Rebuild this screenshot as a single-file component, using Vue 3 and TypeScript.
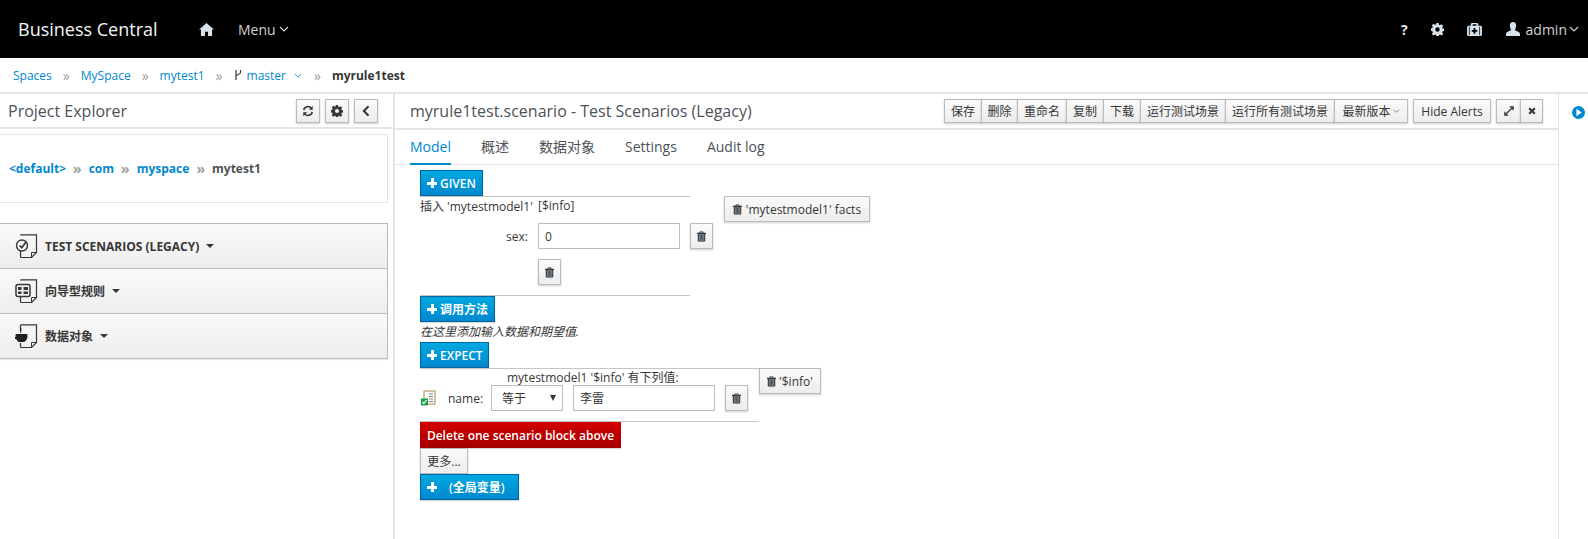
<script setup lang="ts">
const crumbs = ['Spaces', 'MySpace', 'mytest1']
const pkg = ['<default>', 'com', 'myspace']
const actions = [
  { label: '保存', w: 38 },
  { label: '删除', w: 37 },
  { label: '重命名', w: 50 },
  { label: '复制', w: 38 },
  { label: '下载', w: 38 },
  { label: '运行测试场景', w: 86 },
  { label: '运行所有测试场景', w: 110 },
]
const tabs = ['Model', '概述', '数据对象', 'Settings', 'Audit log']
</script>

<template>
  <div class="page">
    <header class="topbar">
      <span class="brand">Business Central</span>
      <svg class="ico home" viewBox="0 0 16 14"><path d="M8 0 L16 7 L14 7 L14 14 L9.6 14 L9.6 9.5 L6.4 9.5 L6.4 14 L2 14 L2 7 L0 7 Z" fill="#d8e2ea"/></svg>
      <span class="menu">Menu</span>
      <svg class="caret" viewBox="0 0 10 6"><path d="M1 1 L5 5 L9 1" fill="none" stroke="#d1d1d1" stroke-width="1.2"/></svg>
      <div class="topright">
        <span class="q">?</span>
        <svg class="ico cog" viewBox="0 0 16 16"><path fill="#d8e2ea" fill-rule="evenodd" d="M6.6 0h2.8l.4 2.2 1.3.6 1.9-1.300 2 2-1.300 1.900.6 1.300 2.200.4v2.800l-2.200.4-.6 1.300 1.300 1.900-2 2-1.900-1.300-1.300.6-.4 2.200H6.600l-.4-2.200-1.300-.6-1.900 1.300-2-2 1.300-1.900-.6-1.300L-.5 9.400V6.600l2.200-.4.6-1.300L1 3l2-2 1.900 1.300 1.300-.6zM8 5.300a2.700 2.700 0 1 0 0 5.400 2.700 2.700 0 0 0 0-5.400z"/></svg>
        <svg class="ico kit" viewBox="0 0 16 14"><path fill="#d8e2ea" fill-rule="evenodd" d="M5 0h6l1 1v2h3l1 1v9l-1 1H1l-1-1V4l1-1h3V1zM6 1.400V3h4V1.400zM7 5.500v2H5v2h2v2h2v-2h2v-2H9v-2zM2 4v9h.8V4zm11.200 0v9h.8V4z"/></svg>
        <svg class="ico user" viewBox="0 0 14 14"><path fill="#d8e2ea" d="M7 0c2 0 3.200 1.500 3.200 3.500S9 7.500 8.800 8.300c1.500.8 5.200 1.500 5.200 3.700v2H0v-2c0-2.200 3.700-2.900 5.200-3.700C5 7.500 3.800 5.500 3.800 3.500S5 0 7 0z"/></svg>
        <span class="admin">admin</span>
        <svg class="caret" viewBox="0 0 10 6"><path d="M1 1 L5 5 L9 1" fill="none" stroke="#d1d1d1" stroke-width="1.2"/></svg>
      </div>
    </header>

    <nav class="crumbs">
      <template v-for="c in crumbs" :key="c">
        <a class="link">{{ c }}</a>
        <span class="sep">»</span>
      </template>
      <svg class="branch" viewBox="0 0 8 12"><path d="M2 1V11M6.500 1V3.500C6.500 5.500 2 5.500 2 7.500" fill="none" stroke="#363636" stroke-width="1.200"/></svg>
      <a class="link branchname">master</a>
      <svg class="caret small" viewBox="0 0 10 6"><path d="M1 1 L5 5 L9 1" fill="none" stroke="#0088ce" stroke-width="1.100"/></svg>
      <span class="sep">»</span>
      <strong class="current">myrule1test</strong>
    </nav>

    <div class="body">
      <aside class="left">
        <div class="lefthead">
          <span class="lefttitle">Project Explorer</span>
          <div class="leftbtns">
            <button class="iconbtn"><svg viewBox="0 0 14 14" class="b"><path d="M2 6a5 5 0 0 1 9-2M12 8a5 5 0 0 1-9 2" fill="none" stroke="#363636" stroke-width="1.800"/><path d="M12.500 1v4.500H8zM1.500 13V8.500H6z" fill="#363636"/></svg></button>
            <button class="iconbtn"><svg viewBox="0 0 16 16" class="b"><path fill="#363636" fill-rule="evenodd" d="M6.600 0h2.800l.4 2.200 1.300.6 1.900-1.300 2 2-1.300 1.900.6 1.300 2.200.4v2.800l-2.200.4-.6 1.300 1.300 1.900-2 2-1.900-1.300-1.300.6-.4 2.200H6.600l-.4-2.200-1.300-.6-1.900 1.300-2-2 1.300-1.900-.6-1.300-2.200-.4V6.600l2.200-.4.6-1.300L1 3l2-2 1.900 1.300 1.300-.6zM8 5.300a2.700 2.700 0 1 0 0 5.400 2.700 2.700 0 0 0 0-5.400z"/></svg></button>
            <button class="iconbtn"><svg viewBox="0 0 10 14" class="b"><path d="M8 1.500 L2.500 7 L8 12.500" fill="none" stroke="#363636" stroke-width="2.400"/></svg></button>
          </div>
        </div>
        <div class="pkg">
          <template v-for="p in pkg" :key="p">
            <a class="pkglink">{{ p }}</a>
            <span class="pkgsep">»</span>
          </template>
          <span class="pkgcur">mytest1</span>
        </div>
        <div class="accordion">
          <div class="acc">
            <span class="docicon">
              <svg viewBox="0 0 24 24"><path d="M5.500 1.500Q5.500 .8 6.500 .8H21.500V18.500L16.500 23.500H6.500Q5.500 23.500 5.500 22.500V17" fill="none" stroke="#363636" stroke-width="1.200"/><path d="M16.500 23.500V18.500H21.500" fill="none" stroke="#363636" stroke-width="1"/><circle cx="7" cy="11.500" r="5.500" fill="#f5f5f5" stroke="#363636" stroke-width="1.400"/><path d="M4.500 11.500 L6.800 13.800 L11 8" fill="none" stroke="#363636" stroke-width="1.700"/></svg>
            </span>
            <span class="acctext latin">TEST SCENARIOS (LEGACY)</span><i class="tri"></i>
          </div>
          <div class="acc">
            <span class="docicon">
              <svg viewBox="0 0 24 24"><path d="M5.500 1.500Q5.500 .8 6.500 .8H21.500V18.500L16.500 23.500H6.500Q5.500 23.500 5.500 22.500V17" fill="none" stroke="#363636" stroke-width="1.200"/><path d="M16.500 23.500V18.500H21.500" fill="none" stroke="#363636" stroke-width="1"/><rect x="1" y="5.500" width="14" height="12" rx="2" fill="#f5f5f5" stroke="#363636" stroke-width="1.500"/><path d="M3 8h3.500v3H3zM3 12.500h3.500V15H3zM8.500 8H13v3H8.500zM8.500 12.500H13V15H8.500z" fill="#363636"/></svg>
            </span>
            <span class="acctext">向导型规则</span><i class="tri"></i>
          </div>
          <div class="acc">
            <span class="docicon">
              <svg viewBox="0 0 24 24"><path d="M5.500 7V1.500Q5.500 .8 6.500 .8H21.500V18.500L16.500 23.500H6.500Q5.500 23.500 5.500 22.500V19" fill="none" stroke="#363636" stroke-width="1.200"/><path d="M16.500 23.500V18.500H21.500" fill="none" stroke="#363636" stroke-width="1"/><path d="M1 10.500H12V12C12 15 10.500 17 9 17.500H4C2.500 17 1 15 1 12ZM5.500 4C7 6 4.500 6.500 6 9" fill="#1f1f1f" stroke="#1f1f1f" stroke-width="1"/><path d="M0 13H2V15H0Z" fill="#1f1f1f"/></svg>
            </span>
            <span class="acctext">数据对象</span><i class="tri"></i>
          </div>
        </div>
      </aside>

      <main class="center">
        <div class="titlebar">
          <span class="doc-title">myrule1test.scenario - Test Scenarios (Legacy)</span>
          <div class="toolbar">
            <div class="group">
              <button v-for="a in actions" :key="a.label" class="tbtn" :style="{ width: a.w + 'px' }">{{ a.label }}</button>
              <button class="tbtn latest">最新版本<svg class="caret tiny" viewBox="0 0 10 6"><path d="M1 1 L5 5 L9 1" fill="none" stroke="#4d5258" stroke-width="1"/></svg></button>
            </div>
            <button class="tbtn alone">Hide Alerts</button>
            <div class="group">
              <button class="tbtn sq1"><svg viewBox="0 0 12 12" class="tool"><path d="M7 1h4v4M5 11H1V7M10.500 1.500 1.500 10.500" fill="none" stroke="#363636" stroke-width="1.500"/></svg></button>
              <button class="tbtn sq2"><svg viewBox="0 0 10 10" class="tool small"><path d="M1.500 1.500 8.500 8.500M8.500 1.500 1.500 8.500" stroke="#363636" stroke-width="2.600"/></svg></button>
            </div>
          </div>
        </div>
        <div class="tabs">
          <span v-for="(t, i) in tabs" :key="t" class="tab" :class="{ active: i === 0 }">{{ t }}</span>
        </div>

        <section class="editor">
          <button class="blue given"><span class="plus"></span>GIVEN</button>
          <div class="block">
            <div class="blockmain">
              <div class="line w270 r1">
                <span class="insert">插入 'mytestmodel1'</span>
                <span>[$info]</span>
              </div>
              <div class="r2">
                <span class="sexlabel">sex:</span>
                <div class="field w142">0</div>
                <button class="gbtn trash">
                  <svg viewBox="0 0 12 14" class="tr"><use href="#trash"/></svg>
                </button>
              </div>
              <div class="r3">
                <button class="gbtn trash nomargin">
                  <svg viewBox="0 0 12 14" class="tr"><use href="#trash"/></svg>
                </button>
              </div>
            </div>
            <button class="gbtn facts">
              <svg viewBox="0 0 12 14" class="tr"><use href="#trash"/></svg>'mytestmodel1' facts
            </button>
          </div>
          <div class="line w270 hr2"></div>
          <button class="blue call"><span class="plus"></span>调用方法</button>
          <div class="hint">在这里添加输入数据和期望值.</div>
          <button class="blue expect"><span class="plus"></span>EXPECT</button>

          <div class="block2">
            <div class="line w339 exp">
              <div class="exptitle">mytestmodel1 '$info' 有下列值:</div>
              <div class="exprow">
                <svg class="factico" viewBox="0 0 16 16">
                  <rect x="4" y="1" width="11" height="13" fill="#fff" stroke="#a8884a"/>
                  <path d="M9 4h4M9 6.500h4M9 9h4M9 11.500h4" stroke="#7b8a7b"/>
                  <rect x="1" y="8.500" width="7" height="7" fill="#1e9e4a"/>
                  <path d="M2.500 12l1.300 1.500L6.500 10" fill="none" stroke="#fff" stroke-width="1.200"/>
                </svg>
                <span class="namelabel">name:</span>
                <div class="field select">等于<i class="seltri"></i></div>
                <div class="field w142 cjk">李雷</div>
                <button class="gbtn trash">
                  <svg viewBox="0 0 12 14" class="tr"><use href="#trash"/></svg>
                </button>
              </div>
            </div>
            <button class="gbtn infobtn">
              <svg viewBox="0 0 12 14" class="tr"><use href="#trash"/></svg>'$info'
            </button>
          </div>
          <div class="line w339 hr3"></div>
          <button class="red">Delete one scenario block above</button>
          <button class="gbtn more">更多...</button>
          <button class="blue globals"><span class="plus"></span><span class="gtext">(全局变量)</span></button>
        </section>
      </main>

      <aside class="rail">
        <svg viewBox="0 0 14 14" class="railico"><circle cx="7" cy="7" r="7" fill="#0088ce"/><path d="M4.800 3 10.500 7 4.800 11Z" fill="#fff"/></svg>
      </aside>
    </div>

    <svg width="0" height="0" class="defs">
      <symbol id="trash" viewBox="0 0 12 14">
        <path fill="#363636" fill-rule="evenodd" d="M4 0h4l1 2h3v1.500H11V13l-1 1H2l-1-1V3.500H0V2h3zM4.800 1.200 4.400 2h3.200l-.4-.8z"/>
        <rect x="2.400" y="3.800" width="7.200" height="8.900" fill="#7a8b96"/>
        <path d="M4.300 4.500v7.500M6 4.500v7.500M7.700 4.500v7.500" stroke="#363636" stroke-width=".8"/>
      </symbol>
    </svg>
  </div>
</template>

<style>
html, body { margin: 0; background: #fff; }
</style>

<style scoped>
.page {
  width: 1588px;
  height: 539px;
  overflow: hidden;
  font-family: "Open Sans", "Noto Sans CJK SC", sans-serif;
  font-size: 12px;
  color: #363636;
  display: flex;
  flex-direction: column;
}
button { font-family: inherit; cursor: pointer; padding: 0; margin: 0; box-sizing: border-box; }
.defs { position: absolute; }

.topbar {
  height: 58px;
  flex: none;
  background: #000;
  display: flex;
  align-items: center;
  color: #d1d1d1;
  padding-left: 18px;
}
.brand { font-size: 18px; color: #f5f5f5; width: 181px; }
.ico.home { width: 15px; height: 13px; margin-right: 24px; }
.menu { font-size: 14px; margin-right: 3px; }
.caret { width: 10px; height: 6px; }
.topright { margin-left: auto; display: flex; align-items: center; padding-right: 9px; }
.q { font-weight: 700; font-size: 14px; color: #e2eaf0; margin-right: 23px; }
.ico.cog { width: 13px; height: 13px; margin-right: 23px; }
.ico.kit { width: 15px; height: 13px; margin-right: 24px; }
.ico.user { width: 14px; height: 14px; margin-right: 6px; }
.admin { font-size: 14px; margin-right: 2px; }

.crumbs {
  height: 36px;
  flex: none;
  box-sizing: border-box;
  border-bottom: 2px solid #e4e4e4;
  display: flex;
  align-items: center;
  padding-left: 13px;
}
.link { color: #0088ce; }
.sep { color: #9c9c9c; font-size: 14px; margin: 0 11px; }
.branch { width: 8px; height: 12px; margin-right: 5px; }
.branchname { margin-right: 8px; }
.caret.small { width: 8px; height: 5px; margin-right: 1px; }
.current { font-weight: 700; color: #363636; }

.body { flex: 1; display: flex; min-height: 0; }
.left {
  width: 395px;
  flex: none;
  box-sizing: border-box;
  border-right: 2px solid #e4e4e4;
}
.lefthead {
  height: 35px;
  box-sizing: border-box;
  border-bottom: 2px solid #e4e4e4;
  display: flex;
  align-items: center;
  padding: 0 15px 0 8px;
  justify-content: space-between;
}
.lefttitle { font-size: 16px; color: #4d5258; }
.leftbtns { display: flex; gap: 5px; }
.iconbtn {
  width: 24px;
  height: 24px;
  border: 1px solid #bbb;
  background: linear-gradient(#fafafa, #ededed);
  display: flex;
  align-items: center;
  justify-content: center;
  box-shadow: 0 1px 2px rgba(0,0,0,.2);
}
.b { width: 12px; height: 12px; }
.pkg {
  width: 388px;
  height: 69px;
  box-sizing: border-box;
  margin-top: 5px;
  border: 1px solid #e4e4e4;
  border-left: none;
  display: flex;
  align-items: center;
  padding-left: 9px;
  font-weight: 700;
}
.pkglink { color: #0088ce; }
.pkgsep { color: #9c9c9c; margin: 0 7px; font-size: 14px; }
.pkgcur { color: #4d5258; }
.accordion {
  width: 388px;
  margin-top: 20px;
  border: 1px solid #bbb;
  border-left: none;
  box-sizing: border-box;
  box-shadow: 0 1px 1px rgba(0,0,0,.08);
}
.acc {
  height: 45px;
  box-sizing: border-box;
  background: linear-gradient(#fafafa, #ededed);
  display: flex;
  align-items: center;
  padding-left: 15px;
  font-weight: 600;
  color: #363636;
}
.acc:first-child { height: 44px; }
.acc + .acc { border-top: 1px solid #bbb; }
.docicon { width: 24px; height: 24px; margin-right: 6px; }
.docicon svg { width: 24px; height: 24px; display: block; }
.acctext { font-size: 12px; font-weight: 600; }
.acctext.latin { font-weight: 700; font-size: 12px; }
.tri {
  width: 0; height: 0;
  border-left: 4px solid transparent;
  border-right: 4px solid transparent;
  border-top: 4px solid #363636;
  margin-left: 7px;
}

.center { flex: 1; min-width: 0; display: flex; flex-direction: column; }
.titlebar {
  height: 36px;
  flex: none;
  box-sizing: border-box;
  border-bottom: 2px solid #e4e4e4;
  display: flex;
  align-items: center;
  padding-left: 15px;
  justify-content: space-between;
}
.doc-title { font-size: 16px; color: #4d5258; }
.toolbar { display: flex; align-items: center; gap: 5px; padding-right: 15px; }
.group { display: flex; }
.tbtn {
  height: 24px;
  border: 1px solid #bbb;
  margin-left: -1px;
  background: linear-gradient(#fafafa, #ededed);
  color: #363636;
  font-size: 12px;
  display: flex;
  align-items: center;
  justify-content: center;
  box-shadow: 0 1px 2px rgba(0,0,0,.2);
  white-space: nowrap;
}
.latest { width: 74px; }
.caret.tiny { width: 7px; height: 4px; margin-left: 2px; margin-right: 0; }
.alone { width: 78px; margin-left: 0; }
.sq1 { width: 25px; margin-left: 0; }
.sq2 { width: 23px; }
.tool { width: 10px; height: 10px; }
.tool.small { width: 8px; height: 8px; }

.tabs {
  height: 35px;
  flex: none;
  box-sizing: border-box;
  border-bottom: 1px solid #e4e4e4;
  padding-left: 15px;
  display: flex;
  gap: 30px;
  font-size: 14px;
  color: #4d5258;
}
.tab {
  height: 35px;
  line-height: 33px;
  box-sizing: border-box;
}
.tab.active { color: #0088ce; border-bottom: 2px solid #0088ce; }

.editor {
  padding: 5px 0 0 25px;
  display: flex;
  flex-direction: column;
  align-items: flex-start;
}
.blue, .red {
  height: 26px;
  box-sizing: border-box;
  color: #fff;
  font-weight: 600;
  font-size: 12px;
  display: flex;
  align-items: center;
  box-shadow: 0 1px 1px rgba(0,0,0,.15);
}
.blue {
  border: 1px solid #00659c;
  background: linear-gradient(#00a8e1, #0088ce);
  padding-left: 6px;
}
.red {
  border: none;
  background: linear-gradient(#d40000, #a30000);
  width: 201px;
  justify-content: center;
  white-space: nowrap;
}
.plus {
  width: 10px;
  height: 10px;
  margin-right: 3px;
  background:
    linear-gradient(#fff, #fff) center / 10px 3px no-repeat,
    linear-gradient(#fff, #fff) center / 3px 10px no-repeat;
}
.given { width: 63px; }
.call { width: 75px; }
.expect { width: 69px; }
.globals { width: 99px; }
.gtext { margin-left: 9px; }

.line { box-sizing: border-box; border-top: 1px solid #c6c6c6; }
.w270 { width: 270px; }
.w339 { width: 339px; }
.block { display: flex; align-items: flex-start; height: 99px; }
.blockmain { width: 304px; }
.r1 { height: 27px; display: flex; align-items: center; padding-bottom: 9px; }
.insert { width: 118px; }
.r2 { display: flex; align-items: center; height: 26px; padding-left: 53px; }
.sexlabel { width: 55px; margin-right: 10px; text-align: right; }
.field {
  height: 26px;
  box-sizing: border-box;
  border: 1px solid #bbb;
  background: #fff;
  display: flex;
  align-items: center;
  padding-left: 6px;
  font-size: 12px;
}
.w142 { width: 142px; }
.gbtn {
  border: 1px solid #bbb;
  background: linear-gradient(#fafafa, #ededed);
  color: #363636;
  box-shadow: 0 1px 2px rgba(0,0,0,.2);
  display: flex;
  align-items: center;
  justify-content: center;
  font-size: 12px;
  height: 26px;
}
.trash { width: 23px; margin-left: 10px; }
.trash.nomargin { margin-left: 0; }
.r3 { padding-left: 118px; margin-top: 10px; }
.tr { width: 9px; height: 11px; flex: none; }
.facts { width: 146px; gap: 4px; }
.hr2 { height: 1px; }
.hint { font-style: italic; height: 20px; line-height: 20px; color: #363636; }
.block2 { display: flex; align-items: flex-start; height: 53px; }
.exp { height: 53px; }
.exptitle { padding-left: 87px; height: 16px; line-height: 18px; }
.exprow { display: flex; align-items: center; height: 26px; }
.factico { width: 16px; height: 16px; margin-right: 12px; }
.namelabel { width: 43px; }
.select {
  width: 72px;
  padding-left: 10px;
  position: relative;
  margin-right: 10px;
}
.seltri {
  position: absolute;
  right: 6px;
  top: 9px;
  width: 0; height: 0;
  border-left: 3px solid transparent;
  border-right: 3px solid transparent;
  border-top: 6px solid #363636;
}
.infobtn { width: 62px; gap: 3px; }
.hr3 { height: 1px; }
.more { width: 48px; }

.rail {
  width: 30px;
  flex: none;
  box-sizing: border-box;
  border-left: 1px solid #e4e4e4;
  display: flex;
  padding: 12px 0 0 13px;
}
.railico { width: 13px; height: 13px; }
</style>
